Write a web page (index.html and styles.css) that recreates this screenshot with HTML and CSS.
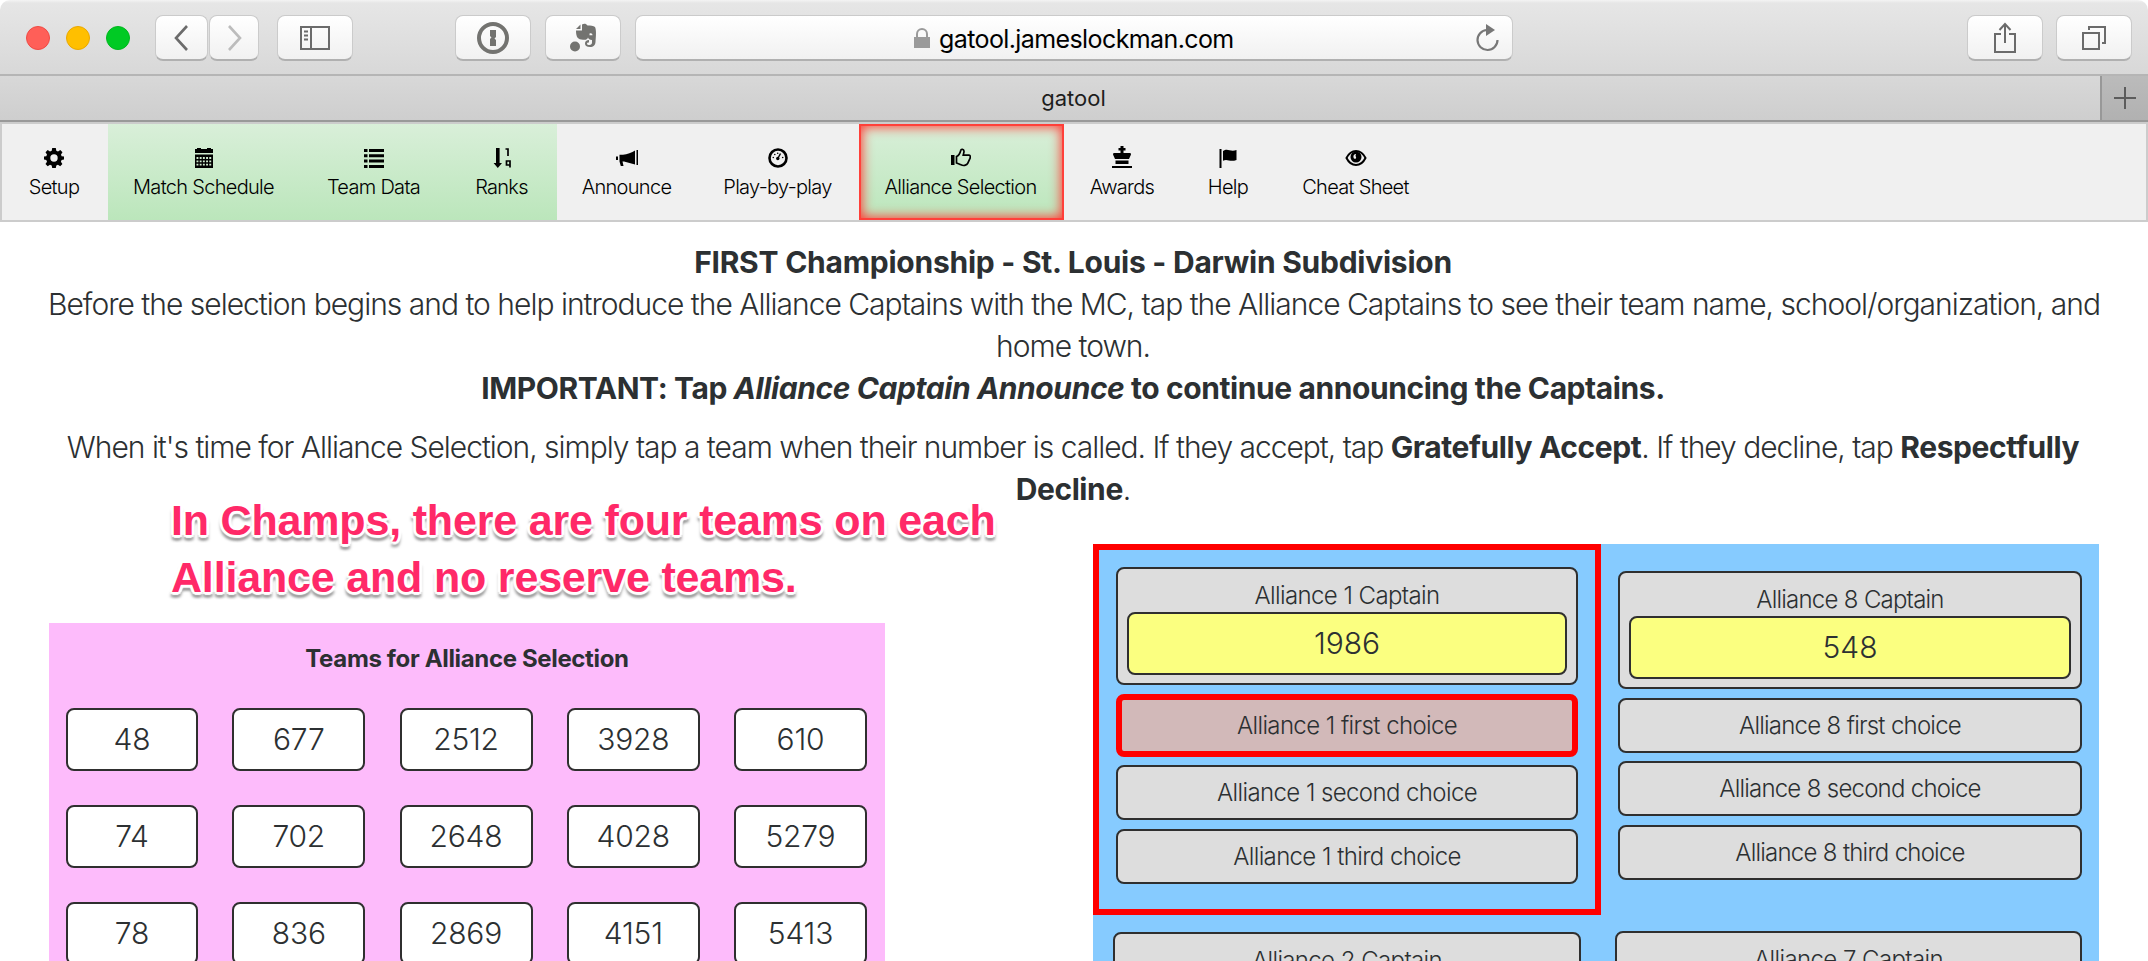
FILE: index.html
```html
<!DOCTYPE html>
<html lang="en">
<head>
<meta charset="utf-8">
<title>gatool</title>
<link rel="stylesheet" href="styles.css">
</head>
<body>
<header class="toolbar">
  <div class="lights"><i class="light red"></i><i class="light amber"></i><i class="light green"></i></div>
  <div class="pair">
    <button class="tb back"><svg width="20" height="30" viewBox="0 0 20 30"><path d="M15 3 4 15 15 27" fill="none" stroke="#6b6b6b" stroke-width="2.6"/></svg></button>
    <button class="tb fwd"><svg width="20" height="30" viewBox="0 0 20 30"><path d="M5 3 16 15 5 27" fill="none" stroke="#bcbcbc" stroke-width="2.6"/></svg></button>
  </div>
  <button class="tb wide side"><svg width="32" height="26" viewBox="0 0 32 26"><path d="M2 2h28v22H2zM12 2v22M5 6.500h4M5 10.500h4M5 14.500h4" fill="none" stroke="#6b6b6b" stroke-width="2"/></svg></button>
  <button class="tb wide onepass"><svg width="34" height="34" viewBox="0 0 34 34"><circle cx="17" cy="17" r="14" fill="none" stroke="#737370" stroke-width="4"/><path d="M14 9h6v7l-1.500 1.500 1.500 1.500v6h-6v-7l1.500-1.500-1.500-1.500z" fill="#737370"/></svg></button>
  <button class="tb wide evernote"><svg width="28" height="29" viewBox="0 0 28 29"><circle cx="6" cy="23.500" r="5" fill="#737370"/><path fill-rule="evenodd" d="M11.500 1.500v4.500H7zM13 1.500C15 .500 17 .500 18.500 2.500c3 0 6 0 7.500 1.500 1.500 3 1 9 .5 15-.3 3.500-2 5-5.500 5-3.500 0-5-1.500-5-3.500S17.500 17 20 17v2.500c-1.500 0-2 .5-2 1.200s1 1.300 2.500 1.300 2.500-1 2.500-2.500V17c-2.500 0-3.500-1-4-2.500-1 2.500-2.500 2.500-5 2.200C9 16.500 7 14.500 7 7.500h6zM20.500 10.500v1.700h3c0-2-1.500-2.500-3-1.700z" fill="#737370"/></svg></button>
  <div class="address">
    <svg class="lock" width="18" height="20" viewBox="0 0 18 20"><path d="M1 9h16v11H1z" fill="#9a9a9a"/><path d="M4 9V6a5 5 0 0 1 10 0v3" fill="none" stroke="#9a9a9a" stroke-width="2"/></svg>
    <span class="url">gatool.jameslockman.com</span>
    <svg class="reload" width="26" height="28" viewBox="0 0 26 28"><path d="M13 6a10 10 0 1 0 10.500 10" fill="none" stroke="#777" stroke-width="2.200"/><path d="M12 0v12l9-6z" fill="#777"/></svg>
  </div>
  <div class="right">
    <button class="tb"><svg width="24" height="32" viewBox="0 0 24 32"><path d="M8 12H2v18h20V12h-6M12 21V2M6.500 8 12 2l5.500 6" fill="none" stroke="#6b6b6b" stroke-width="2"/></svg></button>
    <button class="tb"><svg width="26" height="26" viewBox="0 0 26 26"><path d="M2 8h16v16H2zM8 5V2h16v16h-3" fill="none" stroke="#6b6b6b" stroke-width="2"/></svg></button>
  </div>
</header>
<div class="tabs"><div class="tab">gatool</div><div class="plus"><svg width="22" height="22" viewBox="0 0 22 22"><path d="M11 0v22M0 11h22" stroke="#5c5c5c" stroke-width="2"/></svg></div></div>
<nav class="nav">
  <a class="item setup"><svg class="ic" viewBox="0 0 20 20"><path fill-rule="evenodd" d="M8.200 0h3.600l.5 2.800 1.700.7L16.300 2l2.200 2.300-1.500 2.200.6 1.700 2.400.4v3l-2.400.5-.7 1.700 1.500 2.300-2.200 2.200-2.300-1.500-1.600.7-.5 2.500H8.200l-.5-2.500-1.700-.7-2.300 1.500-2.200-2.200L3 13.800l-.7-1.700L0 11.600v-3l2.300-.4.7-1.700-1.500-2.200L3.700 2 6 3.500l1.700-.7zM10 6.300a3.700 3.700 0 1 0 0 7.400 3.700 3.700 0 0 0 0-7.400z"/></svg><span>Setup</span></a>
  <a class="item on match"><svg class="ic" viewBox="0 0 20 20"><path d="M1 1h2V0h4v1h6V0h4v1h2v4H1zM1 6.500h18V20H1z"/><path d="M2.500 10h15M2.500 13.300h15M2.500 16.600h15" stroke="#cfeccf" stroke-width="1.800" stroke-dasharray="1.900 1.300"/></svg><span>Match Schedule</span></a>
  <a class="item on team"><svg class="ic" viewBox="0 0 20 20"><path d="M0 1h3.500v3H0zM5 1h15v3H5zM0 6.300h3.500v3H0zM5 6.300h15v3H5zM0 11.600h3.500v3H0zM5 11.600h15v3H5zM0 17h3.500v3H0zM5 17h15v3H5z"/></svg><span>Team Data</span></a>
  <a class="item on ranks"><svg class="ic" viewBox="0 0 20 20"><path d="M4 0h3.600v15H10l-4.200 5-4.200-5H4z"/><path d="M13.500 1H16v7M18 19.500V13h-3.500v4H18" fill="none" stroke="#000" stroke-width="1.700"/></svg><span>Ranks</span></a>
  <a class="item ann"><svg class="ic wide-ic" viewBox="0 0 22 20"><path d="M20.500 2H22v15h-1.500zM19 2.500v14L8 13.500H6.500l1 4.500H4.800L3.500 13.500V6.800H7C11 6.500 16 4.500 19 2.500zM0 8.500h2v3.500H0z"/></svg><span>Announce</span></a>
  <a class="item pbp"><svg class="ic" viewBox="0 0 20 20"><circle cx="10" cy="10" r="8.500" fill="none" stroke="#000" stroke-width="2.600"/><circle cx="9.800" cy="10.500" r="1.700"/><path d="M9.800 10.500 12.500 5.500" stroke="#000" stroke-width="1.500"/><circle cx="5.300" cy="9.500" r=".8"/><circle cx="6.800" cy="6.500" r=".8"/><circle cx="9.700" cy="5.200" r=".8"/><circle cx="14.700" cy="9.500" r=".8"/></svg><span>Play-by-play</span></a>
  <a class="item on active"><svg class="ic" viewBox="0 0 20 20"><path d="M0 7h3.500v10H0z"/><path d="M5.500 8.500C8 7.500 9 5.500 9.800 2.200 10.100.8 12.700.9 13 3c.1 1.500-.6 3-.8 4.200H18c1.700.3 1.500 2 1 3.200l-2.300 5c-.5 1.200-1.500 1.600-3 2-2 .5-3.500-.5-5-1.200L5.500 15z" fill="none" stroke="#000" stroke-width="1.700"/></svg><span>Alliance Selection</span></a>
  <a class="item awards"><svg class="ic tall" viewBox="0 0 20 22"><path d="M8.500 0h3v2h2v2.500h-2V7H18.500l.5 1.500-2 4.500H3L1 8.500 1.500 7h7V4.500h-2V2h2zM3.500 14.500h13V18h-13zM0 20h20v2H0z"/></svg><span>Awards</span></a>
  <a class="item help"><svg class="ic" viewBox="0 0 20 20"><path d="M1.500 1h2v19h-2zM5 3c5-3.500 7 1.500 13.500-1v10c-6.500 2.500-9-1.500-13.500.8z"/></svg><span>Help</span></a>
  <a class="item cheat"><svg class="ic wide-ic" viewBox="0 0 22 20"><path d="M1.500 10Q5 3 11 3t9.500 7Q17 17 11 17T1.500 10z" fill="none" stroke="#000" stroke-width="2"/><circle cx="11" cy="9" r="5.500"/><path d="M11 6C8.500 6 7.800 8.500 9 10.500c1.500 1 2.500-.2 2-1.500-.6-1-.5-2 0-3z" fill="#f0f0f0"/></svg><span>Cheat Sheet</span></a>
</nav>
<main class="page">
  <section class="intro">
    <b class="ttl">FIRST Championship - St. Louis - Darwin Subdivision</b><br>
    <span class="l1">Before the selection begins and to help introduce the Alliance Captains with the MC, tap the Alliance Captains to see their team name, school/organization, and</span><br><span>home town.</span><br>
    <b class="imp">IMPORTANT: Tap <i>Alliance Captain Announce</i> to continue announcing the Captains.</b>
  </section>
  <section class="intro second"><span class="l2">When it's time for Alliance Selection, simply tap a team when their number is called. If they accept, tap <b>Gratefully Accept</b>. If they decline, tap <b>Respectfully</b></span><br><b>Decline</b>.</section>
  <div class="note"><span class="n1">In Champs, there are four teams on each</span><br><span class="n2">Alliance and no reserve teams.</span></div>
  <div class="cols">
    <section class="teams">
      <h2>Teams for Alliance Selection</h2>
      <div class="grid">
        <div>48</div><div>677</div><div>2512</div><div>3928</div><div>610</div>
        <div>74</div><div>702</div><div>2648</div><div>4028</div><div>5279</div>
        <div>78</div><div>836</div><div>2869</div><div>4151</div><div>5413</div>
      </div>
    </section>
    <section class="alliances">
      <div class="alliance current">
        <div class="slot captain"><span>Alliance 1 Captain</span><div class="num">1986</div></div>
        <div class="slot next"><span>Alliance 1 first choice</span></div>
        <div class="slot"><span>Alliance 1 second choice</span></div>
        <div class="slot"><span>Alliance 1 third choice</span></div>
      </div>
      <div class="alliance a8">
        <div class="slot captain"><span>Alliance 8 Captain</span><div class="num">548</div></div>
        <div class="slot first"><span>Alliance 8 first choice</span></div>
        <div class="slot"><span>Alliance 8 second choice</span></div>
        <div class="slot"><span>Alliance 8 third choice</span></div>
      </div>
      <div class="alliance a2"><div class="slot captain"><span>Alliance 2 Captain</span></div></div>
      <div class="alliance a7"><div class="slot captain"><span>Alliance 7 Captain</span></div></div>
    </section>
  </div>
</main>
</body>
</html>
```
FILE: styles.css
```css
* { box-sizing: border-box; }
html { background: #fff; }
body { margin: 0; height: 961px; overflow: hidden; background: #fff; color: #2c3032; font-family: "Inter", "Liberation Sans", sans-serif; font-weight: 300; }
svg { display: block; flex: none; }

.toolbar { height: 76px; display: flex; align-items: flex-start; padding: 15px 16px 0 26px; background: linear-gradient(#f4f4f4 0, #e6e6e6 3px, #d8d8d8); border-bottom: 2px solid #b5b5b5; border-radius: 10px 10px 0 0; }
.lights { display: flex; gap: 16px; margin: 11px 25px 0 0; }
.light { width: 24px; height: 24px; border-radius: 50%; }
.red { background: #ff5f58; border: 1px solid #f04a44; }
.amber { background: #ffbf00; border: 1px solid #eaa800; }
.green { background: #00ca24; border: 1px solid #00b81e; }
.pair { display: flex; gap: 1px; margin-right: 18px; }
.tb { width: 76px; height: 46px; padding: 0; display: flex; align-items: center; justify-content: center; border: 1px solid #cbcbcb; border-bottom: 2px solid #b0b0b0; border-radius: 8px; background: linear-gradient(#fff, #f1f1f1); }
.back { width: 53px; }
.fwd { width: 50px; }
.side { margin-right: 102px; }
.onepass { margin-right: 14px; }
.evernote { margin-right: 14px; }
.address { width: 878px; height: 46px; display: flex; align-items: center; border: 1px solid #cbcbcb; border-bottom: 2px solid #b0b0b0; border-radius: 8px; background: linear-gradient(#fff, #f1f1f1); padding: 0 12px 0 277px; color: #000; font-size: 25px; font-weight: 400; }
.url { margin: 2px 0 0 8px; letter-spacing: -.6px; }
.reload { margin-left: auto; }
.right { display: flex; gap: 13px; margin-left: auto; }

.tabs { height: 46px; display: flex; border-bottom: 2px solid #999; background: linear-gradient(#d8d8d8, #cecece); }
.tab { flex: 1; padding-left: 47px; text-align: center; font-size: 22px; line-height: 44px; font-weight: 400; color: #1d1d1d; }
.plus { width: 48px; border-left: 2px solid #989898; background: linear-gradient(#bbb, #b1b1b1); display: flex; align-items: center; justify-content: center; }

.nav { height: 100px; display: flex; border: 2px solid #ccc; background: #f0f0f0; color: #000; font-size: 20px; letter-spacing: -.7px; }
.item { display: flex; flex-direction: column; align-items: center; padding: 24px 2px 0 0; line-height: 28px; white-space: nowrap; }
.item span { margin-top: 5px; }
.ic { width: 20px; height: 20px; }
.wide-ic { width: 22px; }
.tall { height: 22px; margin: -2px 0 0; }
.on { background: linear-gradient(#d9efd9, #bbe6bb); }
.setup { width: 106px; } .match { width: 193px; } .team { width: 147px; } .ranks { width: 109px; }
.ann { width: 141px; } .pbp { width: 161px; } .active { width: 205px; box-shadow: inset 0 0 12px 3px #ff3c36, inset 0 0 0 2px #ff4a44; }
.awards { width: 118px; } .help { width: 94px; } .cheat { width: 161px; }

.page { height: 739px; overflow: hidden; padding: 19px 49px 0; }
.intro { text-align: center; font-size: 30px; line-height: 42px; white-space: nowrap; letter-spacing: -1px; margin: 0 1px 0 -1px; }
.intro .ttl { letter-spacing: -.25px; }
.intro .imp { letter-spacing: -.42px; }
.intro b { letter-spacing: -.4px; }
.intro .l2 { letter-spacing: -1.02px; }
.second { margin-top: 17px; }
b { font-weight: 700; }
.note { height: 0; padding-left: 122px; font-size: 43px; line-height: 57px; font-weight: 700; font-family: "Liberation Sans", sans-serif; letter-spacing: -.18px; color: #ff2968; white-space: nowrap; position: relative; top: -18px;
  text-shadow: 0 -3px 1px #fff, 3px 0 1px #fff, -3px 0 1px #fff, 0 3px 1px #fff, 2px 2px 1px #fff, -2px 2px 1px #fff, 0 5px 3px #999, 2px 5px 3px #aaa, -2px 5px 3px #aaa; }
.cols { display: flex; justify-content: space-between; align-items: flex-start; margin-top: 34px; }
.teams { width: 836px; height: 400px; margin-top: 79px; background: #fdbbfb; }
.teams h2 { margin: 0; padding-top: 19px; height: 85px; text-align: center; font-size: 24px; line-height: 34px; letter-spacing: -.35px; }
.grid { display: grid; grid-template-columns: 132px repeat(4, 133px); justify-content: space-between; padding: 0 18px 0 17px; row-gap: 34px; }
.grid div { height: 63px; border: 2px solid #2f2f2f; border-radius: 8px; background: #fff; text-align: center; font-size: 30px; line-height: 59px; letter-spacing: -.2px; }

.alliances { width: 1006px; height: 500px; background: #86cbff; display: grid; grid-template-columns: 508px 498px; grid-template-rows: 371px 120px; }
.alliance { display: flex; flex-direction: column; font-size: 24px; text-align: center; letter-spacing: -.65px; word-spacing: .3px; }
.current { border: 6px solid #f00; padding: 17px 17px 0; }
.a8 { padding: 27px 17px 0 17px; letter-spacing: -.8px; }
.a2 { padding: 17px 20px 0; }
.a7 { padding: 16px 17px 0 14px; }
.slot { height: 55px; margin-bottom: 9px; border: 2px solid #2f2f2f; border-radius: 8px; background: #ddd; line-height: 51px; }
.first { margin-bottom: 8px; }
.captain { height: 118px; padding: 9px; line-height: 36px; }
.captain span { display: block; height: 34px; }
.num { height: 63px; border: 2px solid #2f2f2f; border-radius: 8px; background: #fbff80; font-size: 30px; line-height: 59px; letter-spacing: 0; }
.next { height: 63px; border: 6px solid #f00; background: #d2b9b9; margin-bottom: 8px; }
```
